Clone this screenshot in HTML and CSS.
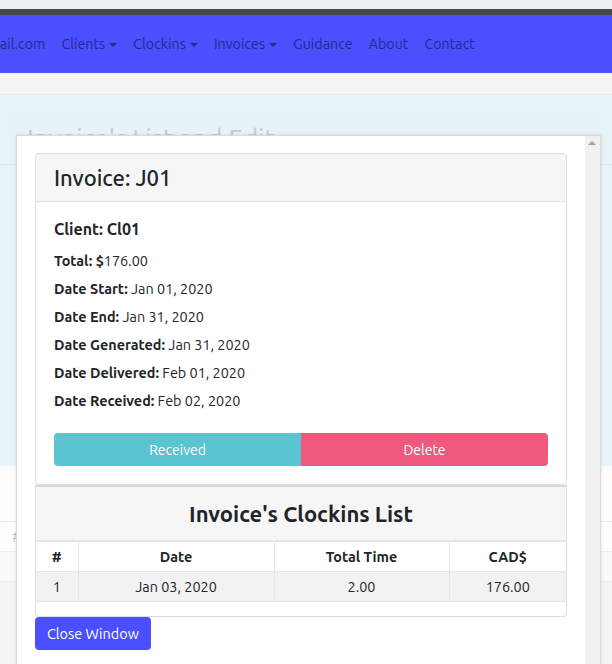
FILE: index.html
```html
<!DOCTYPE html>
<html>
<head>
<meta charset="utf-8">
<link rel="stylesheet" href="styles.css">
</head>
<body>
<div class="topstrip"></div>
<div class="darkbar"></div>
<nav class="navbar">
  <ul class="nav-list">
    <li class="nav-link">ail.com</li>
    <li class="nav-link">Clients<span class="caret"></span></li>
    <li class="nav-link">Clockins<span class="caret"></span></li>
    <li class="nav-link">Invoices<span class="caret"></span></li>
    <li class="nav-link">Guidance</li>
    <li class="nav-link">About</li>
    <li class="nav-link">Contact</li>
  </ul>
</nav>
<div class="crumbband"></div>
<section class="hero">
  <div class="jumbo">
    <h1 class="page-title">Invoice's List and Edit</h1>
  </div>
  <div class="hero-rule"></div>
</section>
<section class="list-area">
  <div class="bg-row bg-row-1"></div>
  <div class="bg-row bg-row-2"><span class="bg-hash">#</span></div>
  <div class="bg-row bg-row-3"></div>
</section>

<div class="modal">
  <div class="modal-content">
    <div class="card">
      <div class="card-header">
        <h2 class="invoice-title">Invoice: J01</h2>
      </div>
      <div class="card-body">
        <h3 class="client">Client: Cl01</h3>
        <p class="field"><b>Total: $</b>176.00</p>
        <p class="field"><b>Date Start:</b> Jan 01, 2020</p>
        <p class="field"><b>Date End:</b> Jan 31, 2020</p>
        <p class="field"><b>Date Generated:</b> Jan 31, 2020</p>
        <p class="field"><b>Date Delivered:</b> Feb 01, 2020</p>
        <p class="field"><b>Date Received:</b> Feb 02, 2020</p>
        <div class="btn-group">
          <button class="btn btn-received">Received</button>
          <button class="btn btn-delete">Delete</button>
        </div>
      </div>
    </div>
    <div class="card card-list">
      <div class="card-header list-header">
        <h2 class="list-title">Invoice's Clockins List</h2>
      </div>
      <table class="clock-table">
        <thead>
          <tr>
            <th class="col-num">#</th>
            <th class="col-date">Date</th>
            <th class="col-time">Total Time</th>
            <th class="col-cad">CAD$</th>
          </tr>
        </thead>
        <tbody>
          <tr class="striped">
            <td>1</td>
            <td>Jan 03, 2020</td>
            <td>2.00</td>
            <td>176.00</td>
          </tr>
        </tbody>
      </table>
      <div class="list-foot"></div>
    </div>
    <button class="btn btn-close">Close Window</button>
  </div>
  <div class="scrollbar"><span class="arrow-up"></span></div>
</div>
</body>
</html>
```
FILE: styles.css
```css
* { box-sizing: border-box; }
html, body { margin: 0; padding: 0; }
body {
  font-family: "Ubuntu", "Open Sans", "Noto Sans", sans-serif;
  color: #212529;
  background: #f4f4f4;
  width: 612px;
  height: 664px;
  overflow: hidden;
  position: relative;
}
.topstrip { height: 9px; background: #eef0f2; }
.darkbar { height: 6px; background: #474747; }
.navbar { height: 58px; background: #4a4fff; display: flex; align-items: center; }
.nav-list { list-style: none; margin: 0; padding: 0; display: flex; gap: 16px; }
.nav-link { font-size: 14.3px; color: #272a8a; display: flex; align-items: center; line-height: 20px; }
.caret {
  display: inline-block; width: 0; height: 0; margin-left: 4px; margin-top: 1px;
  border-left: 4px solid transparent; border-right: 4px solid transparent;
  border-top: 4px solid #272a8a;
}
.crumbband { height: 22px; background: #f4f4f4; border-bottom: 1px solid #e3e8eb; }
.hero { height: 371px; background: #e8f4f8; padding: 15px 7px 0; }
.jumbo { height: 54px; background: #e7f3f7; padding: 12px 20px 0; }
.page-title { margin: 0; font-size: 26px; font-weight: 400; color: #c4cbd0; line-height: 34px; }
.hero-rule { height: 1px; background: #d8e3e8; margin: 0 -7px; }
.list-area { background: #fdfdfd; }
.bg-row { border-bottom: 1px solid #e9ecef; }
.bg-row-1 { height: 56px; }
.bg-row-2 { height: 30px; padding-left: 12px; font-size: 14px; color: #c0c4c8; line-height: 30px; }
.bg-row-3 { height: 30px; background: #fafafa; }

.modal {
  position: absolute; left: 16px; top: 135px;
  width: 585px; height: 540px;
  background: #fff;
  border: 1px solid #d9dcdf;
  box-shadow: 0 0 3px rgba(0,0,0,.12);
  display: flex;
}
.modal-content { flex: 1; padding: 17px 18px; }
.scrollbar { width: 15px; background: #f1f1f1; position: relative; }
.arrow-up {
  position: absolute; left: 3px; top: 5px; width: 0; height: 0;
  border-left: 4px solid transparent; border-right: 4px solid transparent;
  border-bottom: 4px solid #a3a3a3;
}
.card { border: 1px solid #dfdfdf; border-radius: 4px; background: #fff; overflow: hidden; }
.card-header { background: #f6f6f6; border-bottom: 1px solid #e4e4e4; height: 48px; padding: 0 18px; display: flex; align-items: center; }
.invoice-title { margin: 0; font-size: 22px; font-weight: 500; line-height: 28px; }
.card-body { padding: 16px 18px 18px; }
.client { margin: 0 0 7px; font-size: 16px; font-weight: 700; line-height: 22px; }
.field { margin: 0; font-size: 14.4px; line-height: 28px; }
.field b { font-weight: 700; }
.btn-group { display: flex; margin-top: 18px; }
.btn {
  font-family: inherit; border: 0; color: #fff; font-size: 14px; height: 33px; cursor: pointer;
}
.btn-received { flex: 1; background: #5bc4d1; border-radius: 4px 0 0 4px; }
.btn-delete { flex: 1; background: #f0597f; border-radius: 0 4px 4px 0; }
.card-list { border-top: 2px solid #d6d6d6; border-radius: 0 0 4px 4px; }
.list-header { height: 54px; justify-content: center; border-bottom: 1px solid #e4e4e4; }
.list-title { margin: 0; font-size: 22px; font-weight: 700; line-height: 28px; }
.clock-table { width: 100%; border-collapse: collapse; font-size: 14.4px; }
.clock-table th, .clock-table td { border: 1px solid #e3e6e9; height: 30px; text-align: center; padding: 0; }
.clock-table tr > :first-child { border-left: 0; }
.clock-table tr > :last-child { border-right: 0; }
.clock-table th { font-weight: 700; }
.striped td { background: #f2f2f2; }
.col-num { width: 42px; }
.col-date { width: 196px; }
.col-time { width: 175px; }
.list-foot { height: 14px; }
.btn-close { background: #4a4fff; border-radius: 4px; padding: 0 12px; font-size: 14.4px; margin-top: 0; display: block; }
```
